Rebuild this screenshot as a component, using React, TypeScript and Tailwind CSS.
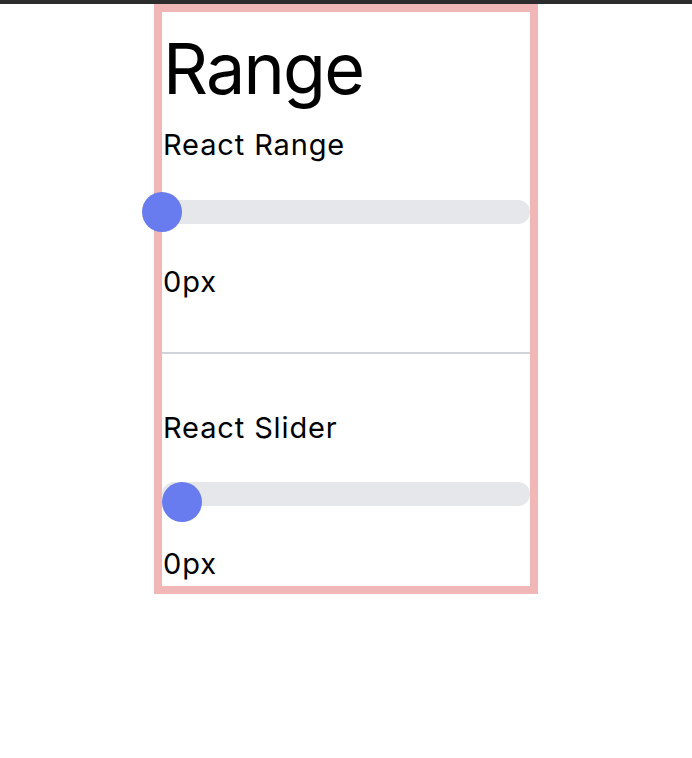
export default function App() {
  return (
    <div className="min-h-screen bg-white font-['Inter',sans-serif] text-black">
      <div className="h-[4px] bg-[#2c2c2c]" />
      <div className="mx-auto w-96 border-8 border-[#f0b7b6] pb-2">
        <h1 className="mt-[21px] pl-px text-[70px] leading-[72px] font-normal tracking-[-0.025em]">Range</h1>
        <p className="mt-[26px] pl-px text-[29px] leading-[28px] tracking-[0.03em]">React Range</p>
        <div className="relative mt-[41px] h-6 rounded-full bg-[#e5e7eb]">
          <div className="absolute left-[-20px] top-[-8px] h-10 w-10 rounded-full bg-[#687bef]" />
        </div>
        <p className="mt-[43.5px] pl-px text-[29px] leading-[28px] tracking-[0.03em]">0px</p>
        <hr className="mt-[56.5px] border-t-2 border-[#d1d5db]" />
        <p className="mt-[59.5px] pl-px text-[29px] leading-[28px] tracking-[0.03em]">React Slider</p>
        <div className="relative mt-[40.5px] h-6 rounded-full bg-[#e5e7eb]">
          <div className="absolute left-0 top-0 h-10 w-10 rounded-full bg-[#687bef]" />
        </div>
        <p className="mt-[44px] pl-px text-[29px] leading-[28px] tracking-[0.03em]">0px</p>
      </div>
    </div>
  );
}
